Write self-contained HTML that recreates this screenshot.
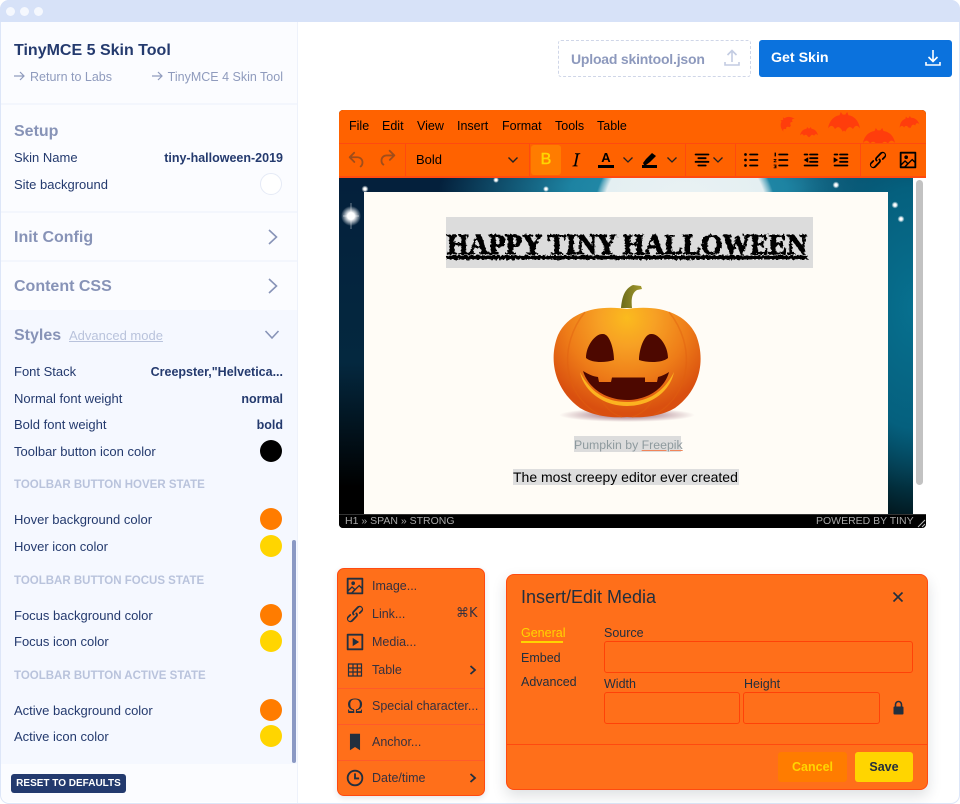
<!DOCTYPE html>
<html><head><meta charset="utf-8"><style>
html,body{margin:0;padding:0;background:#fff}
#p{position:relative;width:960px;height:804px;overflow:hidden;background:#fff;font-family:"Liberation Sans",sans-serif}
.a{position:absolute}
.t{position:absolute;white-space:nowrap;line-height:16px}
.l{font-size:13px;color:#243a6e;left:14px}
.r{font-size:12.5px;color:#243a6e;right:677px;font-weight:bold}
.h{font-size:16px;font-weight:bold;color:#8793b7;left:14px;line-height:20px}
.s{font-size:11.5px;font-weight:bold;color:#b9c3dc;left:14px}
.c{position:absolute;width:22px;height:22px;border-radius:50%;left:260px;box-sizing:border-box}
.d{position:absolute;left:1px;width:296px;height:2px;background:#f3f6fd}
.mn{font-size:12.5px;color:#000;line-height:16px}
.it{font-size:12.5px;color:#36313f;left:372px}
.sep{position:absolute;background:#ff4a0f;width:1px;top:143px;height:34px}
.ms{position:absolute;left:338px;width:146px;height:1px;background:#ff5a2a}
svg{position:absolute;display:block}
.dl{font-size:12.5px;color:#222f3e}
.inp{position:absolute;box-sizing:border-box;border:1.5px solid #ff4208;border-radius:3px}
</style></head><body><div id="p">

<div class="a" style="left:0;top:0;width:960px;height:804px;box-sizing:border-box;border:1.5px solid #dde6f8;border-radius:9px"></div>
<div class="a" style="left:0;top:0;width:960px;height:22px;background:#d7e2f8;border-radius:9px 9px 0 0"></div>
<div class="a" style="left:6px;top:7px;width:9px;height:9px;border-radius:50%;background:#f5f8fe"></div>
<div class="a" style="left:20px;top:7px;width:9px;height:9px;border-radius:50%;background:#f5f8fe"></div>
<div class="a" style="left:34px;top:7px;width:9px;height:9px;border-radius:50%;background:#f5f8fe"></div>

<!-- sidebar -->
<div class="a" style="left:1px;top:22px;width:296px;height:780px;background:#fbfcff;border-radius:0 0 0 8px"></div>
<div class="a" style="left:297px;top:22px;width:1px;height:781px;background:#eef2fb"></div>
<div class="a" style="left:1px;top:310px;width:296px;height:454px;background:#f5f8ff"></div>
<div class="d" style="top:103px"></div>
<div class="d" style="top:211px"></div>
<div class="d" style="top:260px"></div>
<div class="a" style="left:292px;top:540px;width:4px;height:223px;background:#8b99c4;border-radius:2px"></div>

<div class="t" style="left:14px;top:41px;font-size:16px;font-weight:bold;color:#243a6e;line-height:20px">TinyMCE 5 Skin Tool</div>
<svg style="left:14px;top:71px" width="11" height="10" viewBox="0 0 11 10"><path d="M0 5h10M6 1l4 4-4 4" fill="none" stroke="#8f9bbd" stroke-width="1.200"/></svg>
<div class="t" style="left:30px;top:69px;font-size:12.5px;color:#8f9bbd">Return to Labs</div>
<svg style="left:152px;top:71px" width="11" height="10" viewBox="0 0 11 10"><path d="M0 5h10M6 1l4 4-4 4" fill="none" stroke="#8f9bbd" stroke-width="1.200"/></svg>
<div class="t" style="right:677px;top:69px;font-size:12.5px;color:#8f9bbd">TinyMCE 4 Skin Tool</div>

<div class="t h" style="top:122px">Setup</div>
<div class="t l" style="top:150px">Skin Name</div>
<div class="t r" style="top:150px">tiny-halloween-2019</div>
<div class="t l" style="top:177px">Site background</div>
<div class="c" style="top:173px;background:#fff;border:1px solid #e5eaf6"></div>

<div class="t h" style="top:228px">Init Config</div>
<svg style="left:264px;top:228px" width="18" height="18" viewBox="0 0 18 18"><path d="M5 2l7.500 7L5 16" fill="none" stroke="#8793b7" stroke-width="1.600"/></svg>
<div class="t h" style="top:277px">Content CSS</div>
<svg style="left:264px;top:277px" width="18" height="18" viewBox="0 0 18 18"><path d="M5 2l7.500 7L5 16" fill="none" stroke="#8793b7" stroke-width="1.600"/></svg>

<div class="t h" style="top:326px">Styles</div>
<div class="t" style="left:69px;top:328px;font-size:13px;color:#b9c3dc;text-decoration:underline">Advanced mode</div>
<svg style="left:263px;top:326px" width="18" height="18" viewBox="0 0 18 18"><path d="M2.500 5l6.500 7 6.500-7" fill="none" stroke="#8793b7" stroke-width="1.600"/></svg>

<div class="t l" style="top:364px">Font Stack</div>
<div class="t r" style="top:364px">Creepster,"Helvetica...</div>
<div class="t l" style="top:391px">Normal font weight</div>
<div class="t r" style="top:391px">normal</div>
<div class="t l" style="top:417px">Bold font weight</div>
<div class="t r" style="top:417px">bold</div>
<div class="t l" style="top:444px">Toolbar button icon color</div>
<div class="c" style="top:440px;background:#000"></div>

<div class="t s" style="top:477px">TOOLBAR BUTTON HOVER STATE</div>
<div class="t l" style="top:512px">Hover background color</div>
<div class="c" style="top:508px;background:#ff7c00"></div>
<div class="t l" style="top:539px">Hover icon color</div>
<div class="c" style="top:535px;background:#ffd500"></div>

<div class="t s" style="top:573px">TOOLBAR BUTTON FOCUS STATE</div>
<div class="t l" style="top:608px">Focus background color</div>
<div class="c" style="top:604px;background:#ff7c00"></div>
<div class="t l" style="top:634px">Focus icon color</div>
<div class="c" style="top:630px;background:#ffd500"></div>

<div class="t s" style="top:668px">TOOLBAR BUTTON ACTIVE STATE</div>
<div class="t l" style="top:703px">Active background color</div>
<div class="c" style="top:699px;background:#ff7c00"></div>
<div class="t l" style="top:729px">Active icon color</div>
<div class="c" style="top:725px;background:#ffd500"></div>

<div class="a" style="left:11px;top:774px;width:115px;height:19px;background:#233a6e;border-radius:3px"></div>
<div class="t" style="left:11px;top:776px;width:115px;text-align:center;font-size:10px;font-weight:bold;color:#fff;line-height:16px;padding-top:0">RESET TO DEFAULTS</div>

<!-- top buttons -->
<div class="a" style="left:558px;top:40px;width:193px;height:37px;box-sizing:border-box;border:1px dashed #cfd6e8;border-radius:3px"></div>
<div class="t" style="left:571px;top:51px;font-size:14px;letter-spacing:-.2px;font-weight:bold;color:#8d99bd">Upload skintool.json</div>
<svg style="left:724px;top:49px" width="16" height="18" viewBox="0 0 16 18"><path d="M8 13V2M3.500 6L8 1.500 12.500 6M1 13v3h14v-3" fill="none" stroke="#c3cce2" stroke-width="1.600"/></svg>
<div class="a" style="left:759px;top:40px;width:193px;height:37px;background:#0b72dd;border-radius:3px"></div>
<div class="t" style="left:771px;top:50px;font-size:14.2px;font-weight:bold;color:#fff">Get Skin</div>
<svg style="left:925px;top:49px" width="16" height="18" viewBox="0 0 16 18"><path d="M8 1v11M3.500 8L8 12.500 12.500 8M1 13v3h14v-3" fill="none" stroke="#fff" stroke-width="1.600"/></svg>

<!-- editor -->
<div class="a" style="left:339px;top:110px;width:587px;height:418px;border-radius:4px;overflow:hidden;background:#000">
 <div class="a" style="left:0;top:0;width:587px;height:34px;background:#ff6200"></div>
 <div class="a" style="left:0;top:33px;width:587px;height:35px;background:#ff6200;border-top:1px solid #ff4a0f;border-bottom:2px solid #ff4a0f;box-sizing:border-box"></div>
 <div class="a" style="left:0;top:68px;width:574px;height:336px;background:radial-gradient(circle 92px at 346px 40px,#eaf2f4 0,#e4eff2 90%,rgba(200,225,232,.4) 97%,rgba(200,225,232,0) 100%),radial-gradient(ellipse 130px 240px at 574px 130px,#07708f 0,#05607e 50%,rgba(3,40,60,0) 100%),radial-gradient(ellipse 240px 60px at 340px 10px,#2b93b0 0,#1d83a2 45%,rgba(10,70,100,0) 100%),linear-gradient(180deg,#04203c 0,#04283f 55%,#000 92%)"></div>
 <div class="a" style="left:574px;top:68px;width:13px;height:336px;background:#fff"></div>
 <div class="a" style="left:577px;top:70px;width:7px;height:305px;background:#c2c2c2;border-radius:4px"></div>
 <div class="a" style="left:0;top:404px;width:587px;height:14px;background:#000;border-top:1px solid #333;box-sizing:border-box"></div>
</div>

<!-- stars -->
<svg style="left:339px;top:178px" width="574" height="60" viewBox="339 178 574 60">
<defs><radialGradient id="st"><stop offset="0" stop-color="#fff"/><stop offset=".35" stop-color="#fff"/><stop offset="1" stop-color="#fff" stop-opacity="0"/></radialGradient></defs>
<circle cx="351" cy="216" r="10" fill="url(#st)"/><path d="M351 203v26M343 216h16" stroke="#fff" stroke-width=".7" opacity=".6"/>
<circle cx="365" cy="189" r="3.500" fill="url(#st)"/><circle cx="496" cy="180" r="3" fill="url(#st)"/><circle cx="546" cy="189" r="3" fill="url(#st)"/><circle cx="836" cy="185" r="3.500" fill="url(#st)"/><circle cx="895" cy="205" r="3.500" fill="url(#st)"/><circle cx="901" cy="219" r="3.500" fill="url(#st)"/>
</svg>

<div class="a" style="left:364px;top:192px;width:524px;height:322px;background:#fffcf6"></div>
<div class="a" style="left:446px;top:217px;width:367px;height:51px;background:#dcdcdc"></div>
<svg style="left:440px;top:217px" width="380" height="51" viewBox="0 0 380 51">
<defs><filter id="rough" x="-2%" y="-20%" width="104%" height="140%"><feTurbulence type="fractalNoise" baseFrequency=".4" numOctaves="2" seed="4"/><feDisplacementMap in="SourceGraphic" scale="4"/></filter></defs>
<text x="7" y="37" font-family="Liberation Serif" font-weight="bold" font-size="29" textLength="360" lengthAdjust="spacingAndGlyphs" filter="url(#rough)" stroke="#000" stroke-width="1.100" text-decoration="underline">HAPPY TINY HALLOWEEN</text>
</svg>

<!-- pumpkin -->
<svg style="left:545px;top:280px" width="165" height="148" viewBox="545 280 165 148">
<defs>
<radialGradient id="pb" gradientUnits="userSpaceOnUse" cx="627" cy="318" r="95"><stop offset="0" stop-color="#fbbb1e"/><stop offset=".3" stop-color="#f7a024"/><stop offset=".65" stop-color="#ee7c18"/><stop offset="1" stop-color="#d94f0f"/></radialGradient>
<linearGradient id="stm" x1="0" y1="0" x2="1" y2="0"><stop offset="0" stop-color="#6b6a1a"/><stop offset="1" stop-color="#a39a2e"/></linearGradient>
<radialGradient id="shd"><stop offset="0" stop-color="#7a3b52" stop-opacity=".8"/><stop offset="1" stop-color="#7a3b52" stop-opacity="0"/></radialGradient>
</defs>
<ellipse cx="627" cy="415" rx="68" ry="7" fill="url(#shd)"/>
<path d="M621 308c1-10 3-19 12-23l8 1 1 3-5 1c-5 3-6 9-5 18z" fill="url(#stm)"/>
<path d="M627 309C600 305 570 310 558 335C548 360 555 390 580 408C595 417 615 418 627 417C640 418 660 417 675 408C700 390 706 360 696 335C684 310 654 305 627 309Z" fill="url(#pb)"/>
<path d="M585 312C558 345 562 395 600 415M669 312C696 345 692 395 654 415M600 398C606 408 612 414 622 417M654 398C648 408 642 414 632 417" fill="none" stroke="#e0600f" stroke-width="1.500" opacity=".45"/>
<path d="M580 372C584 392 604 406 627 406C650 406 670 392 674 372C664 392 648 402 627 402C606 402 590 392 580 372Z" fill="#fcb320"/>
<path d="M586 358C586 345 596 333 603 334C610 334 614 350 614 360C605 363 592 363 586 358Z" fill="#4d0800"/>
<path d="M668 358C668 345 658 333 651 334C644 334 639 350 639 360C648 363 662 363 668 358Z" fill="#4d0800"/>
<path d="M583 371C590 375 592 376 598 377L599 382L611 382L612 377.500L645 377.500L645 382L657 382L658 377C662 376 666 374 669 372C665 388 648 400 627 400C606 400 588 388 583 371Z" fill="#4d0800"/>
</svg>

<div class="a" style="left:574px;top:436px;width:107px;height:16px;background:#dcdcdc"></div>
<div class="t" style="left:574px;top:437px;font-size:12.300px;color:#8e9a9e">Pumpkin by <span style="text-decoration:underline;text-decoration-color:#f0855a">Freepik</span></div>
<div class="a" style="left:513px;top:469px;width:226px;height:16px;background:#dedede"></div>
<div class="t" style="left:513px;top:469px;font-size:14px;color:#000">The most creepy editor ever created</div>

<div class="t" style="left:345px;top:514px;font-size:10.500px;line-height:14px;color:#a8a8a8">H1 » SPAN » STRONG</div>
<div class="t" style="left:816px;top:514px;font-size:10.500px;line-height:14px;color:#a8a8a8">POWERED BY TINY</div>
<svg style="left:916px;top:518px" width="10" height="10" viewBox="0 0 10 10"><path d="M9 2L2 9M9 6L6 9" stroke="#bbb" stroke-width="1"/></svg>

<!-- menubar -->
<div class="t mn" style="left:349px;top:118px">File</div>
<div class="t mn" style="left:382px;top:118px">Edit</div>
<div class="t mn" style="left:417px;top:118px">View</div>
<div class="t mn" style="left:457px;top:118px">Insert</div>
<div class="t mn" style="left:502px;top:118px">Format</div>
<div class="t mn" style="left:555px;top:118px">Tools</div>
<div class="t mn" style="left:597px;top:118px">Table</div>

<!-- bats -->
<svg style="left:770px;top:108px" width="156" height="35" viewBox="770 108 156 35" fill="#ff3d0c">
<defs><path id="bat" d="M0 50C4 25 20 12 36 10L40 0L46 8L54 8L60 0L64 10C80 12 96 25 100 50C92 38 84 40 78 52C70 42 62 44 54 60L50 56L46 60C38 44 30 42 22 52C16 40 8 38 0 50Z"/></defs>
<use href="#bat" transform="translate(776 125) rotate(-48) scale(.17 .2)"/>
<use href="#bat" transform="translate(800 127) scale(.18 .17)"/>
<use href="#bat" transform="translate(828 112) scale(.32 .33)"/>
<use href="#bat" transform="translate(863 128) scale(.32 .3)"/>
<use href="#bat" transform="translate(898 118) rotate(-10) scale(.2 .2)"/>
</svg>

<!-- toolbar -->
<div class="sep" style="left:405px"></div><div class="sep" style="left:529px"></div><div class="sep" style="left:685px"></div><div class="sep" style="left:735px"></div><div class="sep" style="left:860px"></div>

<svg style="left:346px;top:149px" width="22" height="22" viewBox="0 0 24 24" fill="#a04d1a"><path d="M6.400 8H12c3.700 0 6.200 2 6.800 5.100.6 2.700-.4 5.600-2.300 6.800a1 1 0 0 1-1-1.800c1.100-.6 1.800-2.700 1.400-4.600-.5-2.100-2.100-3.500-4.900-3.500H6.400l3.300 3.300a1 1 0 1 1-1.400 1.400l-5-5a1 1 0 0 1 0-1.400l5-5a1 1 0 0 1 1.400 1.400L6.400 8z"/></svg>
<svg style="left:376px;top:149px" width="22" height="22" viewBox="0 0 24 24" fill="#a04d1a"><path d="M17.600 10H12c-2.800 0-4.400 1.400-4.900 3.500-.4 2 .3 4 1.400 4.600a1 1 0 1 1-1 1.800c-2-1.200-2.900-4.100-2.300-6.800.6-3 3-5.100 6.800-5.100h5.600l-3.300-3.300a1 1 0 1 1 1.400-1.400l5 5a1 1 0 0 1 0 1.400l-5 5a1 1 0 0 1-1.400-1.400l3.300-3.300z" transform="translate(0,-2)"/></svg>
<div class="t" style="left:416px;top:152px;font-size:13px;color:#000">Bold</div>
<svg style="left:507px;top:155px" width="12" height="10" viewBox="0 0 12 10"><path d="M1.500 2.500L6 7l4.500-4.500" fill="none" stroke="#222" stroke-width="1.400"/></svg>
<div class="a" style="left:531px;top:145px;width:30px;height:30px;background:#ff7c00;border-radius:3px"></div>
<div class="t" style="left:531px;top:152px;width:30px;text-align:center;font-size:16px;color:#ffd500;-webkit-text-stroke:.5px #ffd500">B</div>
<svg style="left:565px;top:149px" width="22" height="22" viewBox="0 0 24 24" fill="#000"><path d="M16.700 4.700l-.1.900h-.3c-.6 0-1 0-1.400.3-.3.3-.4.600-.5 1.100l-2.100 9.800v.6c0 .5.400.8 1.400.8h.2l-.2.8H8l.2-.8h.2c1.100 0 1.800-.5 2-1.500l2-9.800.1-.5c0-.6-.4-.8-1.400-.8h-.3l.2-.9h5.800z"/></svg>
<div class="t" style="left:598px;top:150px;width:16px;text-align:center;font-size:13px;font-weight:bold;color:#000">A</div>
<div class="a" style="left:598px;top:165px;width:16px;height:3px;background:#000"></div>
<svg style="left:622px;top:155px" width="12" height="10" viewBox="0 0 12 10"><path d="M1.500 2.500L6 7l4.500-4.500" fill="none" stroke="#222" stroke-width="1.300"/></svg>
<svg style="left:641px;top:151px" width="18" height="18" viewBox="0 0 18 18" fill="#000"><path d="M2 12l3-4 6-6 4 3-6 6-4 3-2 0zM1 14h15v3H1z"/></svg>
<svg style="left:666px;top:155px" width="12" height="10" viewBox="0 0 12 10"><path d="M1.500 2.500L6 7l4.500-4.500" fill="none" stroke="#222" stroke-width="1.300"/></svg>
<svg style="left:691px;top:149px" width="22" height="22" viewBox="0 0 24 24" fill="#000"><path d="M5 5h14c.6 0 1 .4 1 1s-.4 1-1 1H5a1 1 0 1 1 0-2zm3 4h8c.6 0 1 .4 1 1s-.4 1-1 1H8a1 1 0 1 1 0-2zm0 8h8c.6 0 1 .4 1 1s-.4 1-1 1H8a1 1 0 0 1 0-2zm-3-4h14c.6 0 1 .4 1 1s-.4 1-1 1H5a1 1 0 0 1 0-2z"/></svg>
<svg style="left:712px;top:155px" width="12" height="10" viewBox="0 0 12 10"><path d="M1.500 2.500L6 7l4.500-4.500" fill="none" stroke="#222" stroke-width="1.300"/></svg>
<svg style="left:740px;top:149px" width="22" height="22" viewBox="0 0 24 24" fill="#000"><path d="M11 5h8a1 1 0 0 1 0 2h-8a1 1 0 0 1 0-2zm0 6h8a1 1 0 0 1 0 2h-8a1 1 0 0 1 0-2zm0 6h8a1 1 0 0 1 0 2h-8a1 1 0 0 1 0-2z"/><circle cx="6" cy="6" r="1.500"/><circle cx="6" cy="12" r="1.500"/><circle cx="6" cy="18" r="1.500"/></svg>
<svg style="left:770px;top:149px" width="22" height="22" viewBox="0 0 24 24" fill="#000"><path d="M10 5h9a1 1 0 0 1 0 2h-9a1 1 0 0 1 0-2zm0 6h9a1 1 0 0 1 0 2h-9a1 1 0 0 1 0-2zm0 6h9a1 1 0 0 1 0 2h-9a1 1 0 0 1 0-2z"/><path d="M5 4h1.500v4H5zM4 11h3v1l-2 1.500h2v1H4v-1l2-1.500H4zM4 17h3v4H4v-1h2v-.5H5v-1h1V18H4z"/></svg>
<svg style="left:800px;top:149px" width="22" height="22" viewBox="0 0 24 24" fill="#000"><path d="M11 5h8a1 1 0 0 1 0 2h-8a1 1 0 0 1 0-2zm0 4h8a1 1 0 0 1 0 2h-8a1 1 0 0 1 0-2zm0 4h8a1 1 0 0 1 0 2h-8a1 1 0 0 1 0-2zM5 17h14a1 1 0 0 1 0 2H5a1 1 0 0 1 0-2zM5 5h3a1 1 0 0 1 0 2H5a1 1 0 0 1 0-2zM9 9v6l-5-3z"/></svg>
<svg style="left:830px;top:149px" width="22" height="22" viewBox="0 0 24 24" fill="#000"><path d="M11 5h8a1 1 0 0 1 0 2h-8a1 1 0 0 1 0-2zm0 4h8a1 1 0 0 1 0 2h-8a1 1 0 0 1 0-2zm0 4h8a1 1 0 0 1 0 2h-8a1 1 0 0 1 0-2zM5 17h14a1 1 0 0 1 0 2H5a1 1 0 0 1 0-2zM5 5h3a1 1 0 0 1 0 2H5a1 1 0 0 1 0-2zM4 9v6l5-3z"/></svg>
<svg style="left:867px;top:149px" width="22" height="22" viewBox="0 0 24 24" fill="#000"><path d="M6.200 12.300a1 1 0 0 1 1.400 1.400l-2.100 2.100a2 2 0 1 0 2.700 2.700l4.800-4.800a1 1 0 0 0 0-1.400 1 1 0 1 1 1.400-1.300 2.900 2.900 0 0 1 0 4L9.600 20a3.900 3.900 0 0 1-5.500-5.500l2-2zm11.600-.6a1 1 0 0 1-1.400-1.400l2-2a2 2 0 1 0-2.600-2.800L11 10.300a1 1 0 0 0 0 1.400A1 1 0 1 1 9.600 13a2.900 2.900 0 0 1 0-4L14.400 4a3.900 3.900 0 0 1 5.500 5.500l-2 2z"/></svg>
<svg style="left:897px;top:149px" width="22" height="22" viewBox="0 0 24 24" fill="#000"><path fill-rule="evenodd" d="M4 3h16c.6 0 1 .4 1 1v16c0 .6-.4 1-1 1H4a1 1 0 0 1-1-1V4c0-.6.4-1 1-1zm1 2v10.700l3.300-3.200c.3-.3.700-.3 1 0L12 15l4.100-4c.3-.4.800-.4 1 0l2 1.900V5zm0 13v1h3l2.800-2.900-2-2L5 17.900zm14-3l-2.500-2.400-6.400 6.500H19zM10 11a2 2 0 1 0 0-4 2 2 0 0 0 0 4z"/></svg>

<!-- menu -->
<div class="a" style="left:337px;top:568px;width:148px;height:228px;box-sizing:border-box;background:#ff6f1a;border:1px solid #ff4a10;border-radius:7px;box-shadow:0 2px 6px rgba(34,47,62,.12)"></div>
<div class="ms" style="top:688px"></div><div class="ms" style="top:724px"></div><div class="ms" style="top:760px"></div>
<svg style="left:344px;top:575px" width="22" height="22" viewBox="0 0 24 24" fill="#222f3e"><path fill-rule="evenodd" d="M4 3h16c.6 0 1 .4 1 1v16c0 .6-.4 1-1 1H4a1 1 0 0 1-1-1V4c0-.6.4-1 1-1zm1 2v10.700l3.300-3.200c.3-.3.700-.3 1 0L12 15l4.100-4c.3-.4.800-.4 1 0l2 1.900V5zm0 13v1h3l2.800-2.900-2-2L5 17.900zm14-3l-2.500-2.400-6.400 6.500H19zM10 11a2 2 0 1 0 0-4 2 2 0 0 0 0 4z"/></svg>
<svg style="left:344px;top:603px" width="22" height="22" viewBox="0 0 24 24" fill="#222f3e"><path d="M6.200 12.300a1 1 0 0 1 1.400 1.400l-2.100 2.100a2 2 0 1 0 2.700 2.700l4.800-4.800a1 1 0 0 0 0-1.400 1 1 0 1 1 1.400-1.300 2.900 2.900 0 0 1 0 4L9.600 20a3.900 3.900 0 0 1-5.500-5.500l2-2zm11.600-.6a1 1 0 0 1-1.400-1.400l2-2a2 2 0 1 0-2.600-2.800L11 10.300a1 1 0 0 0 0 1.400A1 1 0 1 1 9.600 13a2.900 2.900 0 0 1 0-4L14.400 4a3.900 3.900 0 0 1 5.500 5.500l-2 2z"/></svg>
<svg style="left:344px;top:631px" width="22" height="22" viewBox="0 0 24 24" fill="#222f3e"><path fill-rule="evenodd" d="M4 3h16c.6 0 1 .4 1 1v16c0 .6-.4 1-1 1H4a1 1 0 0 1-1-1V4c0-.6.4-1 1-1zm1 2v14h14V5zm4.500 2.500l7 4.500-7 4.500z"/></svg>
<svg style="left:347px;top:662px" width="16" height="16" viewBox="0 0 16 16"><path d="M1.500 2h13v12h-13zM1.500 6h13M1.500 10h13M6 2v12M10.300 2v12" fill="none" stroke="#222f3e" stroke-width="1.200"/></svg>
<div class="t" style="left:345px;top:696px;width:20px;text-align:center;font-family:'Liberation Serif',serif;font-size:22px;line-height:20px;color:#222f3e">Ω</div>
<svg style="left:344px;top:731px" width="22" height="22" viewBox="0 0 24 24" fill="#222f3e"><path d="M6.500 3h11v18l-5.500-3.500L6.500 21z"/></svg>
<svg style="left:344px;top:767px" width="22" height="22" viewBox="0 0 24 24"><circle cx="12" cy="12" r="8" fill="none" stroke="#222f3e" stroke-width="2"/><path d="M12 7v5.500h4.500" fill="none" stroke="#222f3e" stroke-width="2"/></svg>
<div class="t it" style="top:578px">Image...</div>
<div class="t it" style="top:606px">Link...</div>
<div class="t" style="left:456px;top:606px;font-size:13px;color:#36313f;font-family:'DejaVu Sans',sans-serif">⌘K</div>
<div class="t it" style="top:634px">Media...</div>
<div class="t it" style="top:662px">Table</div>
<div class="t it" style="top:698px">Special character...</div>
<div class="t it" style="top:734px">Anchor...</div>
<div class="t it" style="top:770px">Date/time</div>
<svg style="left:468px;top:665px" width="10" height="10" viewBox="0 0 10 10"><path d="M2.500 1L7 5 2.500 9" fill="none" stroke="#222f3e" stroke-width="1.800"/></svg>
<svg style="left:468px;top:773px" width="10" height="10" viewBox="0 0 10 10"><path d="M2.500 1L7 5 2.500 9" fill="none" stroke="#222f3e" stroke-width="1.800"/></svg>

<!-- dialog -->
<div class="a" style="left:506px;top:574px;width:422px;height:216px;box-sizing:border-box;background:#ff6f1a;border:1px solid #ff4a10;border-radius:8px;box-shadow:0 6px 14px rgba(34,47,62,.15)"></div>
<div class="t" style="left:521px;top:587px;font-size:18px;line-height:20px;color:#222f3e">Insert/Edit Media</div>
<svg style="left:890px;top:589px" width="16" height="16" viewBox="0 0 16 16"><path d="M3.500 3.500l9 9M12.500 3.500l-9 9" stroke="#222f3e" stroke-width="1.600"/></svg>
<div class="t dl" style="left:521px;top:625px;color:#ffd500">General</div>
<div class="a" style="left:521px;top:641px;width:42px;height:2px;background:#ffd500"></div>
<div class="t dl" style="left:521px;top:650px">Embed</div>
<div class="t dl" style="left:521px;top:674px">Advanced</div>
<div class="t dl" style="left:604px;top:625px">Source</div>
<div class="inp" style="left:604px;top:641px;width:309px;height:32px"></div>
<div class="t dl" style="left:604px;top:676px">Width</div>
<div class="t dl" style="left:744px;top:676px">Height</div>
<div class="inp" style="left:604px;top:692px;width:136px;height:32px"></div>
<div class="inp" style="left:743px;top:692px;width:137px;height:32px"></div>
<svg style="left:892px;top:700px" width="13" height="15" viewBox="0 0 13 15"><path d="M3.500 7V4.500a3 3 0 0 1 6 0V7" fill="none" stroke="#222f3e" stroke-width="1.600"/><rect x="1.500" y="6.500" width="10" height="8" rx="1" fill="#222f3e"/></svg>
<div class="a" style="left:507px;top:744px;width:420px;height:1px;background:#ff4a10"></div>
<div class="a" style="left:778px;top:752px;width:69px;height:30px;background:#ff7c00;border-radius:3px"></div>
<div class="t" style="left:778px;top:759px;width:69px;text-align:center;font-size:12.500px;font-weight:bold;color:#ffd500">Cancel</div>
<div class="a" style="left:855px;top:752px;width:58px;height:30px;background:#ffd500;border-radius:3px"></div>
<div class="t" style="left:855px;top:759px;width:58px;text-align:center;font-size:12.500px;font-weight:bold;color:#222f3e">Save</div>

</div></body></html>
